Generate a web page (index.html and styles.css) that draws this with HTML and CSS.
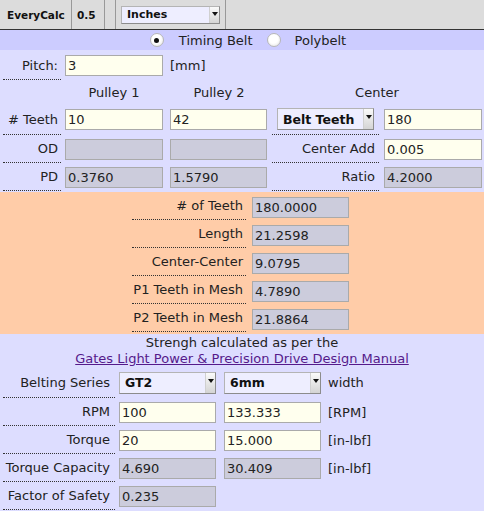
FILE: index.html
```html
<!DOCTYPE html>
<html>
<head>
<meta charset="utf-8">
<link rel="stylesheet" href="styles.css">
</head>
<body>
<div class="topbar">
  <div class="tb-cell brand">EveryCalc</div>
  <div class="tb-cell ver">0.5</div>
  <div class="tb-cell blank"></div>
  <div class="tb-cell units">
    <div class="sel sel-sm"><span class="sel-text">Inches</span><span class="arr"></span></div>
  </div>
</div>
<div class="mode">
  <span class="radio on"></span><span class="mode-label">Timing Belt</span>
  <span class="radio"></span><span class="mode-label">Polybelt</span>
</div>
<div class="pulleys">
  <div class="lbl">Pitch:</div>
  <input class="f" value="3">
  <div class="unit">[mm]</div>
  <div></div><div></div>

  <div></div>
  <div class="head">Pulley 1</div>
  <div class="head">Pulley 2</div>
  <div class="head head-wide">Center</div>

  <div class="lbl"># Teeth</div>
  <input class="f" value="10">
  <input class="f f2" value="42">
  <div class="lbl lbl-wide sel-cell"><div class="sel sel-md"><span class="sel-text">Belt Teeth</span><span class="arr"></span></div></div>
  <input class="f" value="180">

  <div class="lbl">OD</div>
  <input class="f ro" readonly value="">
  <input class="f f2 ro" readonly value="">
  <div class="lbl lbl-wide">Center Add</div>
  <input class="f" value="0.005">

  <div class="lbl">PD</div>
  <input class="f ro" readonly value="0.3760">
  <input class="f f2 ro" readonly value="1.5790">
  <div class="lbl lbl-wide">Ratio</div>
  <input class="f ro" readonly value="4.2000">
</div>
<div class="results">
  <div class="lbl lbl-res"># of Teeth</div><input class="f f2 ro res" readonly value="180.0000">
  <div class="lbl lbl-res">Length</div><input class="f f2 ro res" readonly value="21.2598">
  <div class="lbl lbl-res">Center-Center</div><input class="f f2 ro res" readonly value="9.0795">
  <div class="lbl lbl-res">P1 Teeth in Mesh</div><input class="f f2 ro res" readonly value="4.7890">
  <div class="lbl lbl-res">P2 Teeth in Mesh</div><input class="f f2 ro res" readonly value="21.8864">
</div>
<div class="strength">
  <div>Strengh calculated as per the</div>
  <div><a class="manual" href="#">Gates Light Power &amp; Precision Drive Design Manual</a></div>
</div>
<div class="belting">
  <div class="lbl lbl-b">Belting Series</div>
  <div class="sel sel-md"><span class="sel-text">GT2</span><span class="arr"></span></div>
  <div class="sel sel-md"><span class="sel-text">6mm</span><span class="arr"></span></div>
  <div class="unit">width</div>

  <div class="lbl lbl-b">RPM</div>
  <input class="f f2" value="100">
  <input class="f f2" value="133.333">
  <div class="unit">[RPM]</div>

  <div class="lbl lbl-b">Torque</div>
  <input class="f f2" value="20">
  <input class="f f2" value="15.000">
  <div class="unit">[in-lbf]</div>

  <div class="lbl lbl-b">Torque Capacity</div>
  <input class="f f2 ro" readonly value="4.690">
  <input class="f f2 ro" readonly value="30.409">
  <div class="unit">[in-lbf]</div>

  <div class="lbl lbl-b">Factor of Safety</div>
  <input class="f f2 ro" readonly value="0.235">
  <div></div><div></div>
</div>
</body>
</html>
```
FILE: styles.css
```css
* { box-sizing: border-box; }
body {
  margin: 0;
  width: 484px;
  height: 511px;
  overflow: hidden;
  font-family: "DejaVu Sans", sans-serif;
  font-size: 13px;
  color: #222;
  background: #ddddff;
}
.topbar {
  display: flex;
  height: 30px;
  background: #dcdcdc;
  border-bottom: 1px solid #333;
}
.tb-cell {
  display: flex;
  align-items: center;
  border-right: 1px solid #999;
  font-size: 10.5px;
  font-weight: bold;
  color: #111;
}
.brand { width: 72px; padding-left: 7px; }
.ver { width: 33px; padding-left: 5px; }
.blank { width: 11px; }
.units { width: 110px; padding-left: 5px; }

.sel {
  display: flex;
  align-items: stretch;
  background: #eeeeff;
  border: 1px solid #b4b4b4;
  border-right-color: #8c8c8c;
  border-bottom-color: #8c8c8c;
  font-weight: bold;
  color: #111;
}
.sel-text {
  flex: 1;
  display: flex;
  align-items: center;
  padding-left: 5px;
}
.sel-sm { width: 99px; height: 18px; font-size: 11px; }
.sel-md { width: 97px; height: 22px; font-size: 12.5px; align-self: center; }
.arr {
  width: 10px;
  background: linear-gradient(#fafafa, #d4d4d4);
  border-left: 1px solid #d0d0d0;
  display: flex;
  justify-content: center;
  padding-top: 6px;
}
.sel-sm .arr { padding-top: 5px; }
.arr::after {
  content: "";
  width: 0;
  height: 0;
  border-left: 3px solid transparent;
  border-right: 3px solid transparent;
  border-top: 4px solid #111;
}

.mode {
  height: 20px;
  background: #ccccff;
  display: flex;
  align-items: center;
  justify-content: center;
  padding-left: 12px;
}
.radio {
  width: 14px;
  height: 14px;
  border-radius: 50%;
  border: 1px solid #b8b8b8;
  background: radial-gradient(circle at 45% 40%, #ffffff 45%, #dedede 100%);
  display: flex;
  align-items: center;
  justify-content: center;
}
.radio.on::after {
  content: "";
  width: 5px;
  height: 5px;
  border-radius: 50%;
  background: #111;
}
.mode-label { margin-left: 15px; margin-right: 14px; }
.mode-label:last-child { margin-left: 14px; margin-right: 0; }

.pulleys {
  display: grid;
  grid-template-columns: 62px 105px 102px 112px 100px;
  grid-template-rows: 29px 24px 31px 28px 28px;
  padding: 1px 0 0 3px;
}
.lbl {
  width: 58px;
  border-bottom: 1px dotted #333;
  display: flex;
  align-items: center;
  justify-content: flex-end;
  padding-right: 3px;
  white-space: nowrap;
}
.lbl-wide { width: 107px; padding-right: 4px; }
.sel-cell { justify-content: center; padding-right: 0; }
.f {
  width: 98px;
  height: 21px;
  align-self: center;
  border: 1px solid #aaa;
  background: #ffffee;
  font-family: "DejaVu Sans", sans-serif;
  font-size: 13px;
  color: #222;
  padding: 0 2px;
  margin: 0;
  outline: none;
}
.f2 { width: 97px; }
.ro { background: #ccccdc; }
.unit { align-self: center; }
.head { align-self: center; width: 98px; text-align: center; }
.head-wide { grid-column: 4 / span 2; width: 210px; }

.results {
  margin-top: 1px;
  background: #ffcca8;
  padding: 0 3px 2px 0;
  display: grid;
  grid-template-columns: 114px 97px;
  column-gap: 6px;
  grid-auto-rows: 28px;
  justify-content: center;
}
.lbl-res { width: 114px; }
.res { align-self: end; margin-bottom: 2px; height: 21px; }

.strength {
  text-align: center;
  line-height: 16px;
  padding-top: 1px;
}
.manual { color: #551a8b; text-decoration: underline; }

.belting {
  display: grid;
  grid-template-columns: 116px 105px 104px 1fr;
  grid-template-rows: 31px 28px 28px 28px 28px;
  padding-left: 3px;
}
.lbl-b { width: 112px; padding-right: 5px; }
```
